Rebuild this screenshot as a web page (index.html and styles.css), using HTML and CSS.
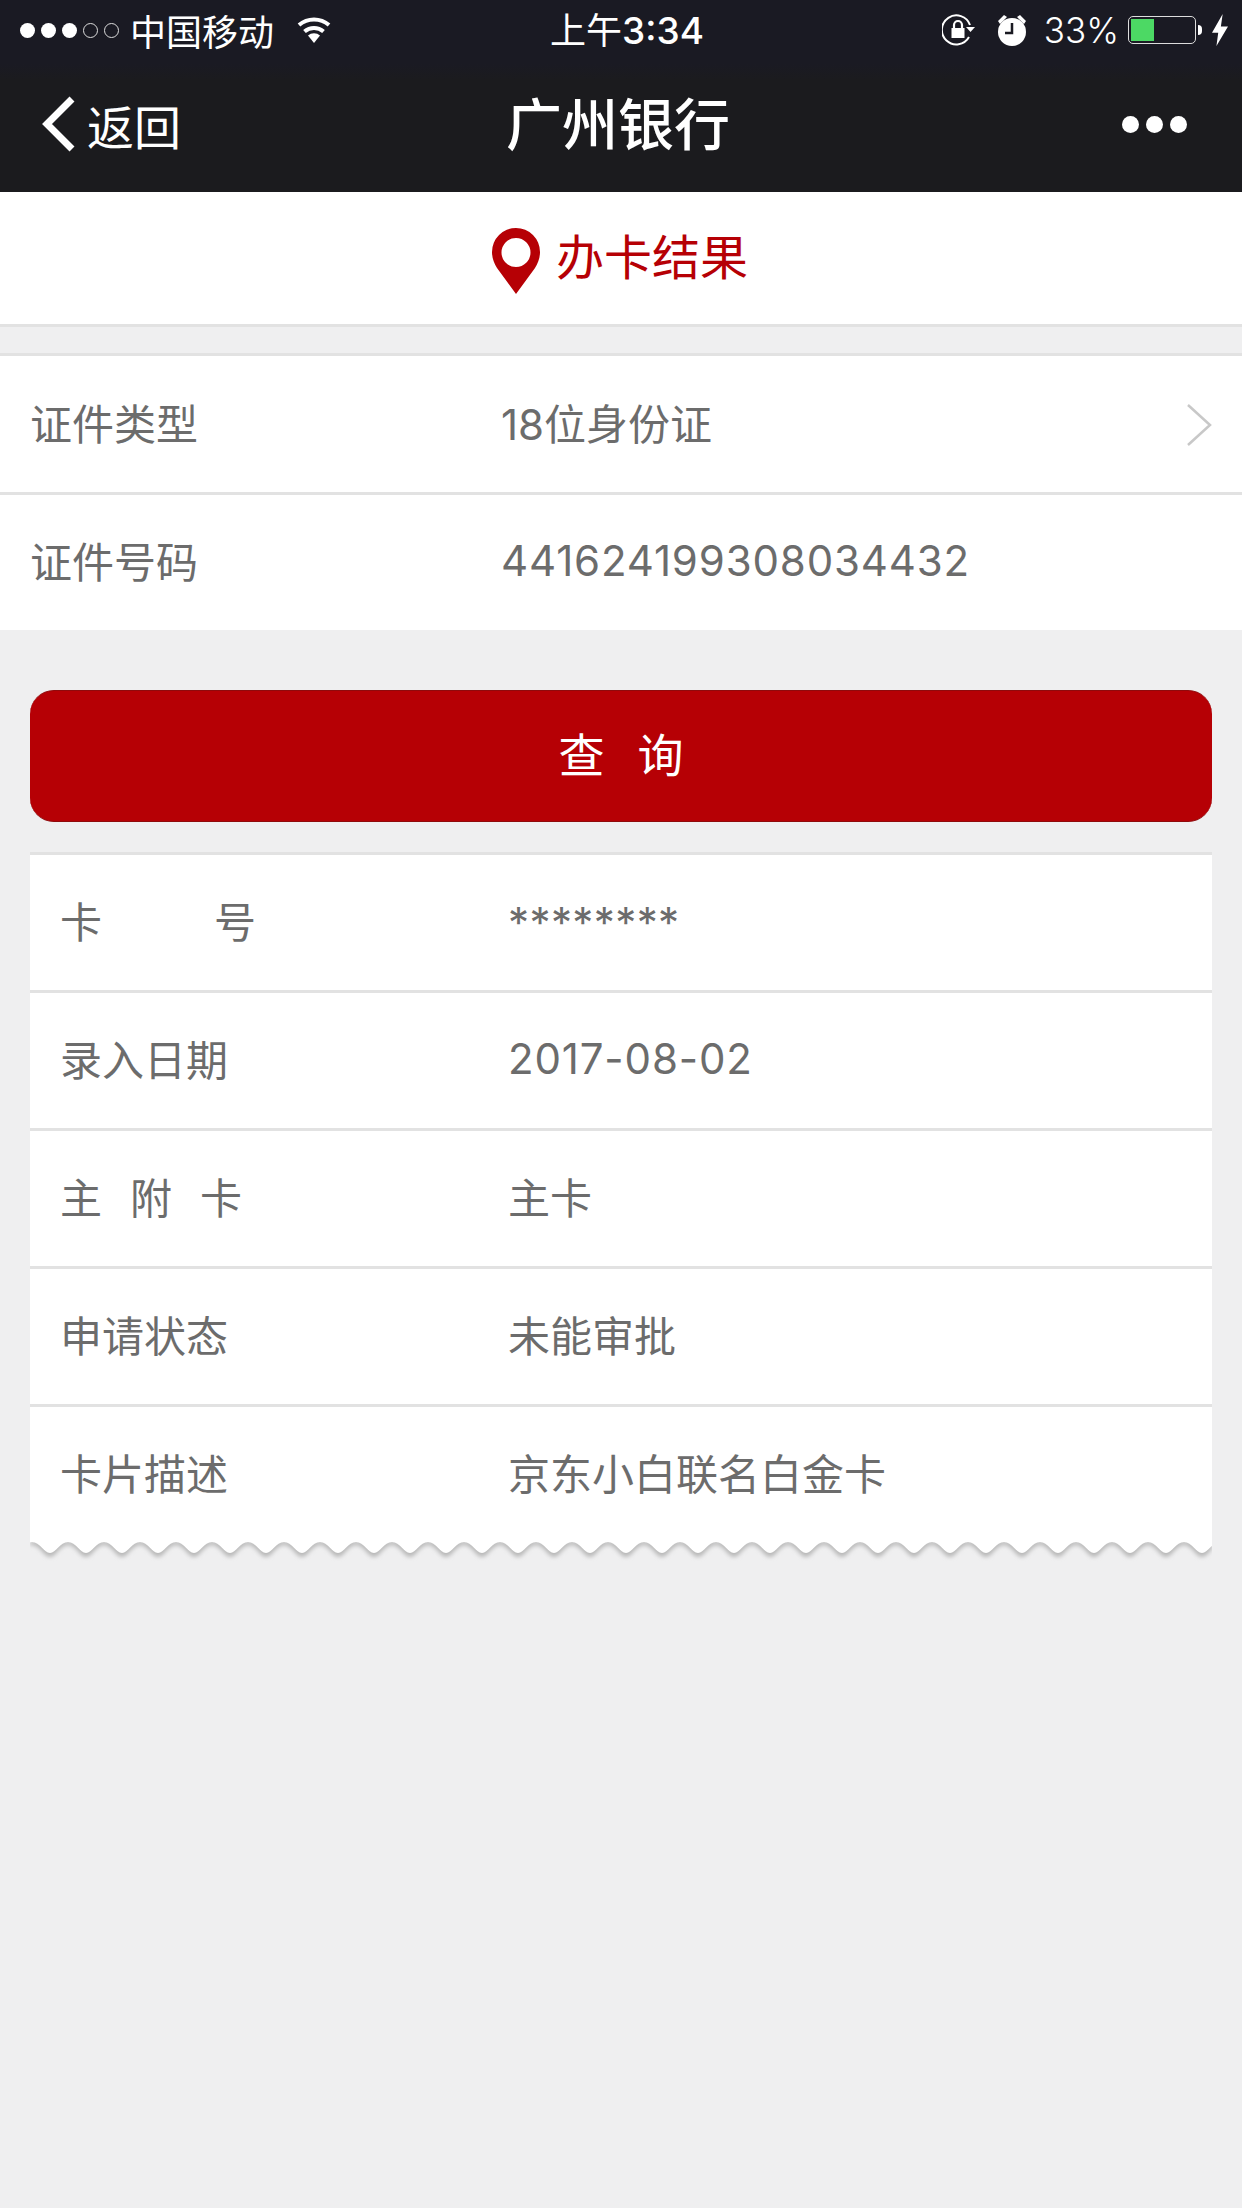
FILE: index.html
```html
<!DOCTYPE html>
<html lang="zh-CN">
<head>
    <meta charset="UTF-8">
    <meta name="viewport" content="width=device-width, initial-scale=1.0">
    <title>广州银行</title>
    <link rel="stylesheet" href="styles.css">
</head>
<body>
    <header class="top">
        <div class="status">
            <div class="status-left">
                <span class="signal"><i></i><i></i><i></i><i class="off"></i><i class="off"></i></span>
                <span class="carrier">中国移动</span>
                <svg class="wifi" width="36" height="26" viewBox="0 0 36 26">
                    <path d="M18 26l-6-7.500a9 9 0 0 1 12 0z" fill="#fff"/>
                    <path d="M8.500 14.500a14.500 14.500 0 0 1 19 0M3 8a23 23 0 0 1 30 0" fill="none" stroke="#fff" stroke-width="4"/>
                </svg>
            </div>
            <div class="status-time">上午<b>3:34</b></div>
            <div class="status-right">
                <svg class="lock" width="34" height="34" viewBox="0 0 34 34">
                    <path d="M27 24a14.500 14.500 0 1 1 1-12" fill="none" stroke="#fff" stroke-width="2"/>
                    <path d="M24 14h9l-4.500 5z" fill="#fff"/>
                    <rect x="9.500" y="15" width="13" height="10" fill="#fff"/>
                    <path d="M12 15v-3a4 4 0 0 1 8 0v3" fill="none" stroke="#fff" stroke-width="2.200"/>
                </svg>
                <svg class="alarm" width="32" height="34" viewBox="0 0 32 34">
                    <circle cx="16" cy="19" r="14" fill="#fff"/>
                    <path d="M2 8l6-6 3 2-7 7zM30 8l-6-6-3 2 7 7z" fill="#fff"/>
                    <path d="M16 10v10h-7" fill="none" stroke="#1a1a22" stroke-width="2.500"/>
                </svg>
                <span class="percent">33%</span>
                <span class="battery"><span class="battery-level"></span></span>
                <span class="nub"></span>
                <svg class="bolt" width="16" height="34" viewBox="0 0 18 36">
                    <path d="M12 0L0 21h7L5 36l13-22h-8z" fill="#fff"/>
                </svg>
            </div>
        </div>
        <nav class="navbar">
            <a class="back" href="#">
                <svg width="36" height="58" viewBox="0 0 36 58">
                    <path d="M32 4L7 29l25 25" fill="none" stroke="#fff" stroke-width="7"/>
                </svg>
                <span>返回</span>
            </a>
            <h1>广州银行</h1>
            <div class="more"><i></i><i></i><i></i></div>
        </nav>
    </header>

    <div class="page-title">
        <svg width="48" height="66" viewBox="0 0 48 66">
            <path fill-rule="evenodd" d="M24 0a24 24 0 0 1 24 24c0 6-2 11-5 16L24 66 5 40c-3-5-5-10-5-16A24 24 0 0 1 24 0zm0 10a14.500 14.500 0 1 0 0 29 14.500 14.500 0 0 0 0-29z" fill="#b60005"/>
        </svg>
        <span>办卡结果</span>
    </div>

    <section class="form">
        <div class="row">
            <div class="label">证件类型</div>
            <div class="value">18位身份证</div>
            <svg class="arrow" width="26" height="44" viewBox="0 0 26 44">
                <path d="M2 2l22 20L2 42" fill="none" stroke="#c8c8c8" stroke-width="2.500"/>
            </svg>
        </div>
        <div class="row">
            <div class="label">证件号码</div>
            <div class="value num">441624199308034432</div>
        </div>
    </section>

    <button class="query" type="button"><span>查</span><span>询</span></button>

    <section class="result">
        <div class="row">
            <div class="label label-wide"><span>卡</span><span>号</span></div>
            <div class="value stars">********</div>
        </div>
        <div class="row">
            <div class="label">录入日期</div>
            <div class="value num">2017-08-02</div>
        </div>
        <div class="row">
            <div class="label label-spaced"><span>主</span><span>附</span><span>卡</span></div>
            <div class="value">主卡</div>
        </div>
        <div class="row">
            <div class="label">申请状态</div>
            <div class="value">未能审批</div>
        </div>
        <div class="row">
            <div class="label">卡片描述</div>
            <div class="value">京东小白联名白金卡</div>
        </div>
    </section>

    <!-- torn paper edge under the result card -->
    <svg class="zigzag" width="1182" height="30" viewBox="0 0 1182 30">
        <defs>
            <pattern id="wave" width="36" height="30" patternUnits="userSpaceOnUse" x="2">
                <path d="M0 1C8 1 12 12 18 12S28 1 36 1V0H0z" fill="#fff"/>
            </pattern>
            <pattern id="waveShade" width="36" height="30" patternUnits="userSpaceOnUse" x="2">
                <path d="M0 4C8 4 12 16 18 16S28 4 36 4V0H0z" fill="#b8b8b8"/>
            </pattern>
            <filter id="soft"><feGaussianBlur stdDeviation="2"/></filter>
        </defs>
        <rect width="1182" height="30" fill="url(#waveShade)" filter="url(#soft)"/>
        <rect width="1182" height="30" fill="url(#wave)"/>
    </svg>
</body>
</html>
```

FILE: styles.css
```css
* {
    box-sizing: border-box;
}

html, body {
    margin: 0;
    padding: 0;
}

body {
    width: 1242px;
    height: 2208px;
    overflow: hidden;
    background-color: #efeff0;
    font-family: Inter, "Noto Sans CJK SC", sans-serif;
    font-weight: 400;
    color: #6c6c6c;
}

/* status bar + nav */
.top {
    height: 192px;
    background: linear-gradient(#1a1a23 0, #1a1a23 64px, #1b1b1e 80px);
    color: #fff;
}

.status {
    height: 60px;
    display: flex;
    align-items: center;
    padding: 0 14px 0 20px;
    font-size: 36px;
}

.status-left, .status-right {
    flex: 1;
    display: flex;
    align-items: center;
}

.status-right {
    justify-content: flex-end;
}

.signal {
    display: flex;
    gap: 6px;
}

.signal i {
    width: 15px;
    height: 15px;
    border-radius: 50%;
    background: #fff;
}

.signal i.off {
    background: none;
    border: 1px solid #ddd;
}

.carrier {
    margin-left: 11px;
}

.wifi {
    margin-left: 22px;
}

.status-time {
    padding: 0 0 4px 6px;
}

.status-time b {
    font-weight: 500;
    font-size: 37px;
}

.lock {
    margin-right: 20px;
}

.alarm {
    margin-right: 16px;
}

.percent {
    margin-right: 9px;
    font-size: 35px;
    font-weight: 300;
}

.battery {
    width: 68px;
    height: 28px;
    padding: 2px;
    border: 1px solid #ddd;
    border-radius: 5px;
}

.battery-level {
    display: block;
    width: 23px;
    height: 100%;
    background: #4cd964;
}

.nub {
    width: 4px;
    height: 10px;
    margin: 0 10px 0 2px;
    background: #fff;
    border-radius: 0 4px 4px 0;
}

.navbar {
    height: 132px;
    display: flex;
    align-items: center;
    justify-content: space-between;
    position: relative;
    padding: 0 55px 4px 40px;
}

.back {
    display: flex;
    align-items: center;
    gap: 11px;
    color: #fff;
    text-decoration: none;
    font-size: 47px;
}

.navbar h1 {
    position: absolute;
    left: 0;
    right: 6px;
    margin: 0;
    padding-bottom: 8px;
    text-align: center;
    font-size: 56px;
    font-weight: 500;
}

.more {
    display: flex;
    gap: 7px;
}

.more i {
    width: 17px;
    height: 17px;
    border-radius: 50%;
    background: #fff;
}

/* page title */
.page-title {
    height: 135px;
    background: #fff;
    border-bottom: 3px solid #e2e2e2;
    display: flex;
    align-items: center;
    justify-content: center;
    gap: 16px;
    font-size: 48px;
    color: #b60005;
    padding-right: 2px;
}

.page-title svg {
    margin-top: 6px;
}

.page-title span {
    padding-bottom: 8px;
}

.form {
    margin-top: 26px;
    background: #fff;
}

.row {
    height: 138px;
    padding: 0 0 6px;
    display: flex;
    align-items: center;
    position: relative;
    background: #fff;
    border-top: 3px solid #e2e2e2;
    font-size: 42px;
}

.label {
    display: flex;
}

.form .label {
    width: 501px;
    padding-left: 30px;
}

.form .row {
    height: 139px;
}

.form .row:last-child {
    height: 138px;
}

.num {
    letter-spacing: 0.850px;
    margin-top: 2px;
}

.stars {
    letter-spacing: 0.400px;
    margin-top: 6px;
}

.arrow {
    position: absolute;
    right: 30px;
    top: 47px;
}

.query {
    display: flex;
    align-items: center;
    justify-content: center;
    gap: 33px;
    width: 1182px;
    height: 132px;
    margin: 60px 30px 30px;
    padding: 0 0 8px;
    background: #b60005;
    border: none;
    border-top: 1px solid #8f0a0c;
    border-bottom: 1px solid #8f0a0c;
    border-radius: 24px;
    color: #fff;
    font-family: inherit;
    font-weight: 400;
    font-size: 46px;
}

.result {
    width: 1182px;
    margin: 0 30px;
}

.result .label {
    width: 478px;
    padding-left: 30px;
}

.result .label.label-wide {
    gap: 112px;
}

.result .label.label-spaced {
    gap: 28px;
}

.zigzag {
    display: block;
    margin: -1px 0 0 30px;
}
```
